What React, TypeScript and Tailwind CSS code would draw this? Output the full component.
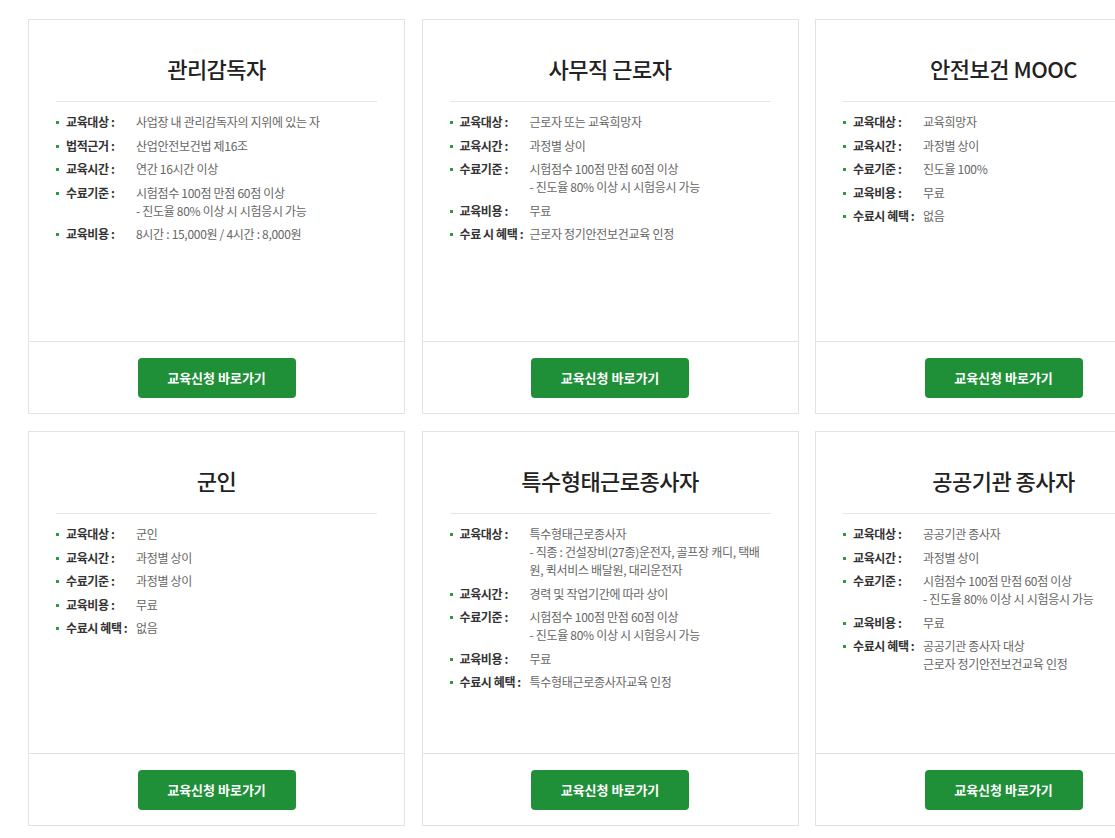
import React from 'react';

type Item = { label: string; lines: string[] };
type Course = { title: string; items: Item[] };

const passLines = ['시험점수 100점 만점 60점 이상', '- 진도율 80% 이상 시 시험응시 가능'];

const courses: Course[] = [
  {
    title: '관리감독자',
    items: [
      { label: '교육대상 :', lines: ['사업장 내 관리감독자의 지위에 있는 자'] },
      { label: '법적근거 :', lines: ['산업안전보건법 제16조'] },
      { label: '교육시간 :', lines: ['연간 16시간 이상'] },
      { label: '수료기준 :', lines: passLines },
      { label: '교육비용 :', lines: ['8시간 : 15,000원 / 4시간 : 8,000원'] },
    ],
  },
  {
    title: '사무직 근로자',
    items: [
      { label: '교육대상 :', lines: ['근로자 또는 교육희망자'] },
      { label: '교육시간 :', lines: ['과정별 상이'] },
      { label: '수료기준 :', lines: passLines },
      { label: '교육비용 :', lines: ['무료'] },
      { label: '수료 시 혜택 :', lines: ['근로자 정기안전보건교육 인정'] },
    ],
  },
  {
    title: '안전보건 MOOC',
    items: [
      { label: '교육대상 :', lines: ['교육희망자'] },
      { label: '교육시간 :', lines: ['과정별 상이'] },
      { label: '수료기준 :', lines: ['진도율 100%'] },
      { label: '교육비용 :', lines: ['무료'] },
      { label: '수료시 혜택 :', lines: ['없음'] },
    ],
  },
  {
    title: '군인',
    items: [
      { label: '교육대상 :', lines: ['군인'] },
      { label: '교육시간 :', lines: ['과정별 상이'] },
      { label: '수료기준 :', lines: ['과정별 상이'] },
      { label: '교육비용 :', lines: ['무료'] },
      { label: '수료시 혜택 :', lines: ['없음'] },
    ],
  },
  {
    title: '특수형태근로종사자',
    items: [
      {
        label: '교육대상 :',
        lines: ['특수형태근로종사자', '- 직종 : 건설장비(27종)운전자, 골프장 캐디, 택배', '원, 퀵서비스 배달원, 대리운전자'],
      },
      { label: '교육시간 :', lines: ['경력 및 작업기간에 따라 상이'] },
      { label: '수료기준 :', lines: passLines },
      { label: '교육비용 :', lines: ['무료'] },
      { label: '수료시 혜택 :', lines: ['특수형태근로종사자교육 인정'] },
    ],
  },
  {
    title: '공공기관 종사자',
    items: [
      { label: '교육대상 :', lines: ['공공기관 종사자'] },
      { label: '교육시간 :', lines: ['과정별 상이'] },
      { label: '수료기준 :', lines: passLines },
      { label: '교육비용 :', lines: ['무료'] },
      { label: '수료시 혜택 :', lines: ['공공기관 종사자 대상', '근로자 정기안전보건교육 인정'] },
    ],
  },
];

const CourseCard: React.FC<{ course: Course }> = ({ course }) => {
  return (
    <div className="w-[377px] h-[395px] border border-[#e3e3e3] bg-white flex flex-col">
      <div className="h-[321px] px-[27px] pt-[33px]">
        <h3 className="text-center text-[22px] leading-[30px] font-medium text-[#222] tracking-[-0.5px] pb-[18px] border-b border-[#e6e6e6]">
          {course.title}
        </h3>
        <ul className="mt-[11px] flex flex-col gap-[5.5px] text-[12px] leading-[18px]">
          {course.items.map((item) => (
            <li key={item.label} className="flex items-start">
              <span className="w-[3px] h-[3px] bg-[#2e9a44] mt-[8px] mr-[7px] shrink-0"></span>
              <span className="w-[70px] shrink-0 font-bold text-[#333] whitespace-nowrap tracking-[-0.4px]">{item.label}</span>
              <div className="text-[#666] tracking-[-0.3px]">
                {item.lines.map((line) => (
                  <p key={line} className="whitespace-nowrap">{line}</p>
                ))}
              </div>
            </li>
          ))}
        </ul>
      </div>
      <div className="flex-1 border-t border-[#e3e3e3] flex items-center justify-center">
        <button className="w-[158px] h-[40px] rounded-[4px] bg-[#1f9038] text-white text-[13px] font-bold">
          교육신청 바로가기
        </button>
      </div>
    </div>
  );
};

export default function App() {
  return (
    <div
      className="w-[1115px] h-[838px] overflow-hidden bg-white"
      style={{ fontFamily: '"Noto Sans CJK KR", "Noto Sans", sans-serif' }}
    >
      <div className="pt-[19px] pl-[28px] grid grid-cols-[repeat(3,377px)] gap-x-[16.5px] gap-y-[17px] w-max">
        {courses.map((c) => (
          <CourseCard key={c.title} course={c} />
        ))}
      </div>
    </div>
  );
}
